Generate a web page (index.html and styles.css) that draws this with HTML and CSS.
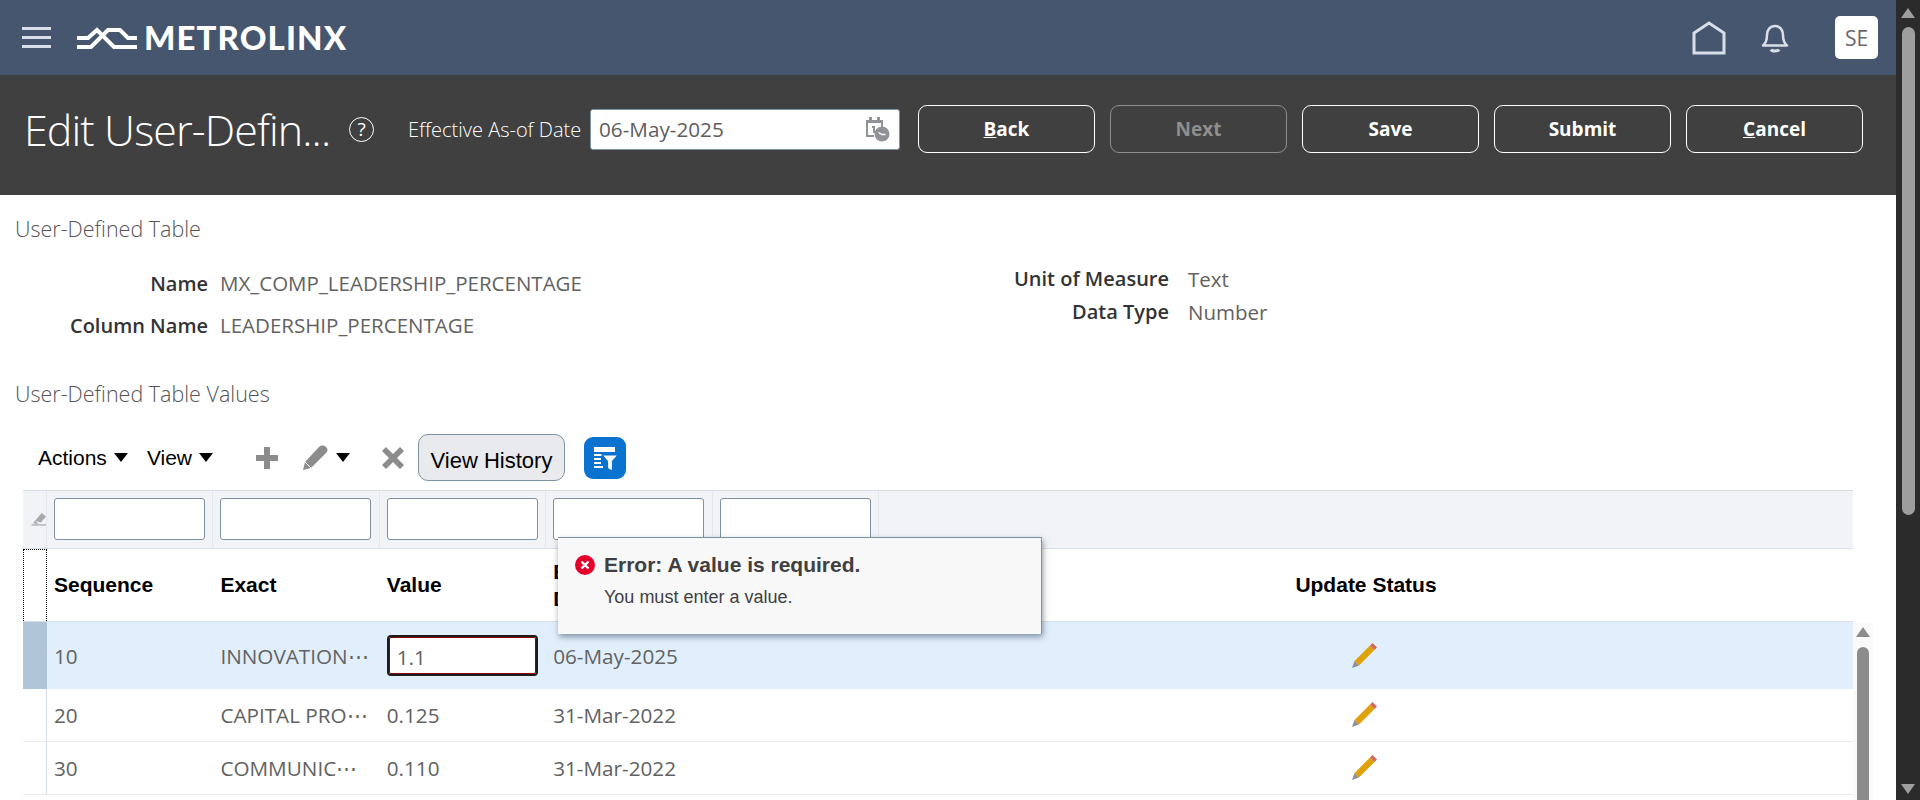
FILE: index.html
```html
<!DOCTYPE html>
<html lang="en">
<head>
  <meta charset="UTF-8" />
  <title>Edit User-Defined Table Values</title>
  <link rel="stylesheet" href="styles.css">
</head>
<body>

<div class="page">
  <div class="main">

    <header class="topbar">
      <div class="hamburger"><span></span><span></span><span></span></div>
      <div class="logo">
        <svg class="logo-mark" width="62" height="26" viewBox="0 0 62 26">
          <path d="M1 13H12L21 5L38 22H61" fill="none" stroke="#fff" stroke-width="4"/>
          <path d="M1 22H15L32 5H44L52 13H61" fill="none" stroke="#fff" stroke-width="4"/>
        </svg>
        <span class="logo-text">METROLINX</span>
      </div>
      <div class="topbar-right">
        <svg class="home-icon" width="36" height="34" viewBox="0 0 36 34">
          <path d="M3 32V12L18 2L33 12V32Z" fill="none" stroke="#d8dfe9" stroke-width="3"/>
        </svg>
        <svg class="bell-icon" width="28" height="30" viewBox="0 0 28 30">
          <path d="M2 22.500C5 20 6 17 6 12C6 7 9 3 14 3C19 3 22 7 22 12C22 17 23 20 26 22.500Z" fill="none" stroke="#d8dfe9" stroke-width="2.500" stroke-linejoin="round"/>
          <path d="M10 26.500C11 28.500 17 28.500 18 26.500" fill="none" stroke="#d8dfe9" stroke-width="3"/>
        </svg>
        <div class="avatar">SE</div>
      </div>
    </header>

    <div class="titlebar">
      <h1 class="page-title">Edit User-Defin...</h1>
      <div class="help-icon">?</div>
      <label class="date-label">Effective As-of Date</label>
      <div class="date-input">
        <span>06-May-2025</span>
        <svg width="26" height="26" viewBox="0 0 26 26">
          <path d="M2 4H19V11H17V7H4V19H10V21H2Z" fill="#8f9398"/>
          <rect x="5" y="1" width="3" height="5" fill="#8f9398"/>
          <rect x="13" y="1" width="3" height="5" fill="#8f9398"/>
          <path d="M8 10H11V17H9V12H8Z" fill="#8f9398"/>
          <circle cx="18" cy="18" r="7.500" fill="#8f9398"/>
          <path d="M14.500 16.500L18 18.500H21.500" fill="none" stroke="#fff" stroke-width="1.300"/>
        </svg>
      </div>
      <div class="title-buttons">
        <button class="btn"><u>B</u>ack</button>
        <button class="btn btn-disabled">Next</button>
        <button class="btn">Save</button>
        <button class="btn">Submit</button>
        <button class="btn"><u>C</u>ancel</button>
      </div>
    </div>

    <section class="content">
      <h2 class="section-title">User-Defined Table</h2>

      <div class="form-area">
        <div class="form-col form-col-left">
          <div class="form-row"><label>Name</label><span>MX_COMP_LEADERSHIP_PERCENTAGE</span></div>
          <div class="form-row"><label>Column Name</label><span>LEADERSHIP_PERCENTAGE</span></div>
        </div>
        <div class="form-col form-col-right">
          <div class="form-row"><label>Unit of Measure</label><span>Text</span></div>
          <div class="form-row"><label>Data Type</label><span>Number</span></div>
        </div>
      </div>

      <h2 class="section-title values-title">User-Defined Table Values</h2>

      <div class="toolbar">
        <span class="menu">Actions <i class="arrow"></i></span>
        <span class="menu menu-view">View <i class="arrow"></i></span>
        <svg class="tool-add" width="24" height="24" viewBox="0 0 24 24">
          <path d="M9 1H15V9H23V15H15V23H9V15H1V9H9Z" fill="#8c8c8c"/>
        </svg>
        <svg class="tool-edit" width="28" height="28" viewBox="0 0 28 28">
          <path d="M2 26L4 18L18 3C20 1 23 1 25 3C27 5 27 7 25 9L10 24Z" fill="#8c8c8c"/>
          <path d="M4 18L10 24" stroke="#fff" stroke-width="1"/>
        </svg>
        <i class="arrow tool-arrow"></i>
        <svg class="tool-delete" width="24" height="24" viewBox="0 0 24 24">
          <path d="M5 1L12 8L19 1L23 5L16 12L23 19L19 23L12 16L5 23L1 19L8 12L1 5Z" fill="#8c8c8c"/>
        </svg>
        <button class="history-btn">View History</button>
        <div class="filter-btn">
          <svg width="28" height="28" viewBox="0 0 28 28">
            <path d="M3 3H24V8H3Z" fill="#fff"/>
            <path d="M3 10H11V12H3ZM3 14H10V16H3ZM3 18H10V20H3ZM3 22H12V24H3Z" fill="#fff"/>
            <path d="M11 11H27L21.500 17.500V27L16.500 24.500V17.500Z" fill="#fff" stroke="#0a72cf" stroke-width="1.200"/>
          </svg>
        </div>
      </div>

      <div class="table-wrap">
        <div class="table-body">
          <div class="row filter-row">
            <div class="cell marker-cell">
              <svg width="22" height="22" viewBox="0 0 20 20">
                <path d="M7 12L15 3L20 7L14 14Z" fill="#a9a9a9"/>
                <path d="M3 17H20" stroke="#a9a9a9" stroke-width="1.500"/>
                <path d="M5 15L7 12L11 15L9 16Z" fill="#a9a9a9"/>
              </svg>
            </div>
            <div class="cell"><div class="filter-input"></div></div>
            <div class="cell"><div class="filter-input"></div></div>
            <div class="cell"><div class="filter-input"></div></div>
            <div class="cell"><div class="filter-input"></div></div>
            <div class="cell no-line"><div class="filter-input"></div></div>
          </div>

          <div class="row head-row">
            <div class="cell marker-cell dotted"></div>
            <div class="cell">Sequence</div>
            <div class="cell">Exact</div>
            <div class="cell">Value</div>
            <div class="cell">Effective<br>Date</div>
            <div class="cell"></div>
            <div class="cell status-cell">Update Status</div>
          </div>

          <div class="row data-row selected">
            <div class="cell marker-cell"></div>
            <div class="cell">10</div>
            <div class="cell">INNOVATION⋯</div>
            <div class="cell"><div class="value-input">1.1</div></div>
            <div class="cell">06-May-2025</div>
            <div class="cell"></div>
            <div class="cell status-cell">
              <svg class="pencil" width="28" height="28" viewBox="0 0 28 28">
                <path d="M2 26L4.500 19L9 23.500Z" fill="#8a8f99"/>
                <path d="M4.500 19L20 3.500L24.500 8L9 23.500Z" fill="#e0a20c"/>
                <path d="M20 3.500L22.500 1L27 5.500L24.500 8Z" fill="#d4675c"/>
              </svg>
            </div>
          </div>

          <div class="row data-row row-two">
            <div class="cell marker-cell"></div>
            <div class="cell">20</div>
            <div class="cell">CAPITAL PRO⋯</div>
            <div class="cell">0.125</div>
            <div class="cell">31-Mar-2022</div>
            <div class="cell"></div>
            <div class="cell status-cell">
              <svg class="pencil" width="28" height="28" viewBox="0 0 28 28">
                <path d="M2 26L4.500 19L9 23.500Z" fill="#8a8f99"/>
                <path d="M4.500 19L20 3.500L24.500 8L9 23.500Z" fill="#e0a20c"/>
                <path d="M20 3.500L22.500 1L27 5.500L24.500 8Z" fill="#d4675c"/>
              </svg>
            </div>
          </div>

          <div class="row data-row row-two">
            <div class="cell marker-cell"></div>
            <div class="cell">30</div>
            <div class="cell">COMMUNIC⋯</div>
            <div class="cell">0.110</div>
            <div class="cell">31-Mar-2022</div>
            <div class="cell"></div>
            <div class="cell status-cell">
              <svg class="pencil" width="28" height="28" viewBox="0 0 28 28">
                <path d="M2 26L4.500 19L9 23.500Z" fill="#8a8f99"/>
                <path d="M4.500 19L20 3.500L24.500 8L9 23.500Z" fill="#e0a20c"/>
                <path d="M20 3.500L22.500 1L27 5.500L24.500 8Z" fill="#d4675c"/>
              </svg>
            </div>
          </div>
        </div>

        <div class="table-scroll">
          <i class="tri-up"></i>
          <div class="table-thumb"></div>
        </div>

        <!-- error note over the value column -->
        <div class="error-note">
          <div class="error-title">
            <svg width="22" height="22" viewBox="0 0 22 22">
              <circle cx="11" cy="11" r="10" fill="#e4002b"/>
              <path d="M7.500 7.500L14.500 14.500M14.500 7.500L7.500 14.500" stroke="#fff" stroke-width="2.400"/>
            </svg>
            <span>Error: A value is required.</span>
          </div>
          <div class="error-text">You must enter a value.</div>
        </div>
      </div>
    </section>
  </div>

  <aside class="page-scroll">
    <i class="tri-up light"></i>
    <div class="page-thumb"></div>
    <i class="tri-down light"></i>
  </aside>
</div>

</body>
</html>
```

FILE: styles.css
```css
* { box-sizing: border-box; }
html, body { margin: 0; height: 100%; overflow: hidden; }
body { font-family: "Open Sans", "Noto Sans", sans-serif; background: #fff; }

.page { display: flex; height: 800px; overflow: hidden; }
.main { flex: 1; min-width: 0; height: 800px; overflow: hidden; }

/* top bar */
.topbar {
  height: 75px;
  background: #46566f;
  display: flex;
  align-items: center;
  padding: 0 18px 0 22px;
}
.hamburger { display: flex; flex-direction: column; gap: 6px; width: 29px; margin-right: 25px; }
.hamburger span { display: block; height: 3px; background: #d8dfe9; }
.logo { display: flex; align-items: center; gap: 6px; }
.logo-text {
  font-family: "Lato", sans-serif;
  font-weight: 900;
  font-size: 33px;
  letter-spacing: 1.100px;
  color: #fff;
  line-height: 1;
}
.topbar-right { margin-left: auto; display: flex; align-items: center; }
.home-icon { margin-right: 34px; }
.bell-icon { margin-right: 46px; }
.avatar {
  width: 43px;
  height: 43px;
  background: #fff;
  border-radius: 5px;
  color: #6a6a6a;
  font-size: 21px;
  display: flex;
  align-items: center;
  justify-content: center;
}

/* title bar */
.titlebar {
  height: 120px;
  background: #404040;
  display: flex;
  align-items: center;
  padding: 0 32px 12px 24px;
  color: #fff;
}
.page-title { margin: 0; font-size: 43px; font-weight: 300; width: 308px; white-space: nowrap; letter-spacing: -0.900px; }
.help-icon {
  width: 25px;
  height: 25px;
  border: 1.500px solid #fff;
  border-radius: 50%;
  font-size: 19px;
  display: flex;
  align-items: center;
  justify-content: center;
  margin: 0 34px 0 17px;
}
.date-label { font-size: 20px; font-weight: 300; margin-right: 10px; white-space: nowrap; width: 172px; }
.date-input {
  width: 310px;
  height: 41px;
  background: #fff;
  border: 1px solid #7d92a5;
  border-radius: 3px;
  display: flex;
  align-items: center;
  justify-content: space-between;
  padding: 0 9px 0 8px;
  color: #5e5e5e;
  font-size: 20.700px;
  font-weight: 500;
}
.title-buttons { display: flex; gap: 15px; margin-left: 18px; }
.btn {
  width: 177px;
  height: 48px;
  background: transparent;
  border: 1px solid #fff;
  border-radius: 9px;
  color: #fff;
  font-family: inherit;
  font-size: 19px;
  font-weight: 700;
}
.btn-disabled { color: #8e8e8e; border-color: #8e8e8e; }

/* form part */
.content { padding: 0 23px; }
.section-title { margin: 0 0 0 -8px; font-size: 21.500px; font-weight: 300; color: #555; padding-top: 20px; line-height: 28px; }
.form-area { display: flex; height: 137px; }
.form-col { display: flex; flex-direction: column; }
.form-col-left { width: 990px; padding-top: 23px; gap: 8px; }
.form-col-right { padding-top: 19px; }
.form-row { display: flex; align-items: center; gap: 12px; height: 34px; font-size: 20px; }
.form-row label { font-weight: 600; color: #333; text-align: right; }
.form-row span { color: #626262; font-weight: 500; font-size: 20.500px; }
.form-col-left label { width: 185px; }
.form-col-right .form-row { height: 33px; gap: 19px; }
.form-col-right label { flex: 0 0 156px; white-space: nowrap; }
.values-title { padding-top: 0; }

/* toolbar */
.toolbar { height: 73px; margin-top: 13px; display: flex; align-items: center; font-family: "Liberation Sans", Arial, sans-serif; font-size: 21px; color: #000; padding-left: 15px; }
.menu { display: flex; align-items: center; gap: 7px; margin-right: 19px; }
.arrow { display: inline-block; border-left: 7px solid transparent; border-right: 7px solid transparent; border-top: 9px solid #000; }
.tool-add { margin: 0 22px 0 23px; }
.tool-arrow { margin: 0 31px 0 7px; }
.tool-delete { margin-right: 13px; }
.history-btn {
  width: 147px;
  height: 47px;
  background: #e8eaed;
  border: 1px solid #7d92a5;
  border-radius: 10px;
  font-family: inherit;
  font-size: 22px;
  padding: 6px 0 0;
  color: #000;
}
.filter-btn {
  width: 42px;
  height: 42px;
  margin-left: 19px;
  background: #0a72cf;
  border-radius: 9px;
  display: flex;
  align-items: center;
  justify-content: center;
}

/* table */
.table-wrap { position: relative; display: flex; margin-top: -4px; }
.table-body { width: 1830px; }
.row { display: grid; grid-template-columns: 24px repeat(5, 166.400px) 1fr; }
.cell { padding: 0 7px; display: flex; align-items: center; min-width: 0; white-space: nowrap; }
.marker-cell { padding: 0; overflow: hidden; }

.filter-row { height: 59px; background: #f1f3f7; border-top: 1px solid #d6dfe8; border-bottom: 1px solid #d6dfe8; }
.filter-row .cell { border-right: 1px solid #e2e7ed; padding-bottom: 2px; }
.filter-row .no-line { padding-right: 0; }
.filter-row .marker-cell { padding-left: 6px; }
.filter-input { width: 151px; height: 42px; background: #fff; border: 1px solid #7d92a5; border-radius: 3px; flex: none; }

.head-row { height: 73px; font-family: "Liberation Sans", Arial, sans-serif; font-weight: 700; font-size: 21px; color: #000; line-height: 1.300; border-bottom: 1px solid #d6dfe8; }
.dotted { border: 1px dotted #000; border-bottom: none; }
.status-cell { justify-content: center; grid-column: 7; padding: 0 3px 0 0; }

.data-row { font-size: 20.700px; font-weight: 500; color: #626262; border-bottom: 1px solid #e8ebee; }
.head-row .status-cell { padding: 0; }
.data-row.selected { height: 67px; background: #e1effd; border-bottom: none; }
.data-row.selected .marker-cell { background: #b0c6d8; }
.row-two { height: 53px; }
.row-two .marker-cell { border-right: 1px solid #d6dfe8; }
.value-input {
  width: 151px;
  height: 41px;
  background: #fff;
  border: 2px solid #1c1c1c;
  box-shadow: inset 0 0 0 1px #8b0000;
  border-radius: 4px;
  padding: 3px 8px 0;
  display: flex;
  align-items: center;
  flex: none;
}

.table-scroll { flex: none; width: 20px; background: #fafafa; margin-top: 132px; padding: 5px 4px 0; display: flex; flex-direction: column; align-items: center; height: 250px; }
.table-thumb { width: 12px; flex: 1; background: #8c8c8c; border-radius: 6px 6px 0 0; margin-top: 10px; }

/* little triangles on the scrollbars */
.tri-up, .tri-down { display: block; border-left: 7px solid transparent; border-right: 7px solid transparent; flex: none; }
.tri-up { border-bottom: 10px solid #8c8c8c; }
.tri-down { border-top: 10px solid #8c8c8c; }
.tri-up.light { border-bottom-color: #9e9e9e; }
.tri-down.light { border-top-color: #9e9e9e; }

.error-note {
  position: absolute;
  left: 535px;
  top: 47px;
  width: 484px;
  height: 97px;
  background: #f8f8f8;
  border-top: 1px solid #7d92a5;
  border-right: 1px solid #7d92a5;
  box-shadow: 1px 3px 6px rgba(40, 60, 80, 0.5);
  padding: 15px 16px;
  font-family: "Liberation Sans", Arial, sans-serif;
  color: #404040;
}
.error-title { display: flex; align-items: center; gap: 8px; font-size: 21px; font-weight: 700; }
.error-text { font-size: 18px; margin: 10px 0 0 30px; }

/* page scrollbar */
.page-scroll { flex: none; width: 24px; background: #2b2b2b; display: flex; flex-direction: column; align-items: center; padding: 8px 0 6px; }
.page-thumb { width: 13px; height: 488px; background: #9e9e9e; border-radius: 7px; margin-top: 9px; }
.page-scroll .tri-down { margin-top: auto; }
```
